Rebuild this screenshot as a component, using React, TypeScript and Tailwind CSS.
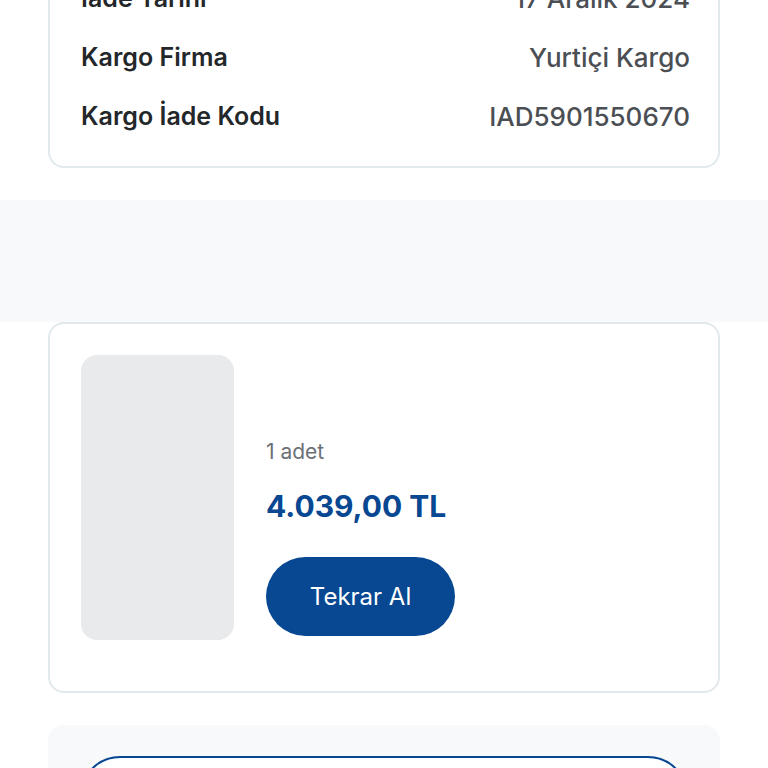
import React from 'react';

interface DetailRowProps {
  label: string;
  value: string;
}

const details: DetailRowProps[] = [
  { label: 'İade Tarihi', value: '17 Aralık 2024' },
  { label: 'Kargo Firma', value: 'Yurtiçi Kargo' },
  { label: 'Kargo İade Kodu', value: 'IAD5901550670' }
];

const DetailRow: React.FC<DetailRowProps> = ({ label, value }) => (
  <div className="flex h-[59px] items-center justify-between">
    <dt className="text-[25px] font-semibold text-[#24272a]">{label}</dt>
    <dd className="text-[26px] font-medium text-[#4b4f54]">{value}</dd>
  </div>
);

const ReturnDetails: React.FC = () => (
  <section className="bg-white px-12 pb-8">
    <dl className="-mt-[31px] rounded-2xl border-2 border-t-0 border-[#e1e9ed] pr-7 pb-5 pl-[31px]">
      {details.map((detail) => (
        <DetailRow key={detail.label} {...detail} />
      ))}
    </dl>
  </section>
);

const ProductCard: React.FC = () => (
  <article className="flex gap-8 rounded-2xl border-2 border-[#e1e9ed] bg-white px-[31px] pt-[31px] pb-[51px]">
    <div className="h-[285px] w-[153px] shrink-0 rounded-2xl bg-[#e9eaec]" />
    <div className="flex flex-col items-start pt-[79px]">
      <p className="text-[21px] leading-9 text-[#6c7075]">1 adet</p>
      <p className="mt-4 text-[30px] leading-10 font-bold text-[#084792]">4.039,00 TL</p>
      <button
        type="button"
        className="mt-[31px] h-[79px] w-[189px] rounded-full bg-[#084792] text-2xl text-white"
      >
        Tekrar Al
      </button>
    </div>
  </article>
);

const App: React.FC = () => (
  <main className="h-screen overflow-hidden bg-white font-['Inter',sans-serif]">
    <ReturnDetails />
    <div className="h-[122px] bg-[#f8f9fb]" />
    <section className="px-12">
      <ProductCard />
      <div className="mt-8 rounded-t-2xl bg-[#f8f9fb] px-8 pt-[31px]">
        <button type="button" className="h-20 w-full rounded-full border-2 border-[#084792] bg-white" />
      </div>
    </section>
  </main>
);

export default App;
